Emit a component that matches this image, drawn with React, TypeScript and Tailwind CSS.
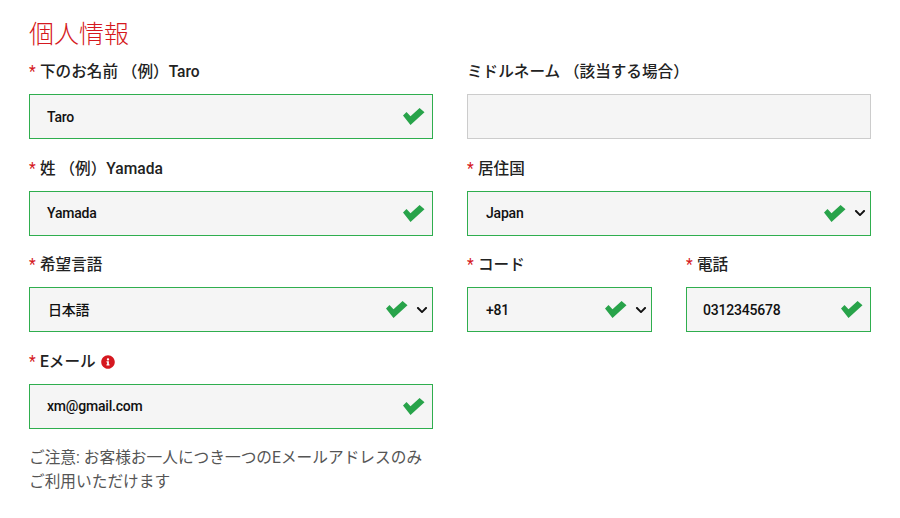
import {FaChevronDown, FaInfoCircle} from "react-icons/fa";

interface LabelProps {
	text: string,
	required?: boolean,
	info?: boolean,
}

interface FieldProps extends LabelProps {
	value?: string,
	select?: boolean,
	valid?: boolean,
	indent?: string,
}

function Check() {
	return <svg viewBox="0 0 22 17" className="w-[22px] h-[17px] shrink-0 text-[#28a34a]" fill="currentColor">
		<polygon points="0,7.5 3.5,4 7.5,8.2 16.6,0 21.5,4.2 7.5,17" />
	</svg>
}

function Label({text, required = true, info}: LabelProps) {
	return <div className="h-[26px] flex items-center text-[15.6px] font-medium leading-[26px] text-[#222]">
		{required && <span className="text-[#d51820] w-[11px] font-normal">*</span>}
		<span>{text}</span>
		{info && <FaInfoCircle className="ml-[5px] size-[14px] text-[#d51820]" />}
	</div>
}

function Field({text, required, info, value = "", select, valid = true, indent = "pl-[17px]"}: FieldProps) {
	return <div className="min-w-0">
		<Label text={text} required={required} info={info} />
		<div className={`mt-[9px] h-[45px] flex items-center bg-[#f5f5f5] border ${valid ? "border-[#2fae4e]" : "border-[#cccccc]"} ${indent} pr-[7px] text-[14px] tracking-[-0.2px] font-medium text-[#111]`}>
			<span className="flex-1 pt-[1px]">{value}</span>
			{valid && <Check />}
			{select && <FaChevronDown className="ml-[8px] -mr-[3px] size-[12px] text-[#111]" />}
		</div>
	</div>
}

export default function App() {
	return <div className="w-[900px] h-[518px] bg-white overflow-hidden pl-[29px] pt-[19px] font-['Roboto','Noto_Sans_CJK_JP',sans-serif]">
		<h1 className="text-[25px] leading-[32px] font-light text-[#d51820]">個人情報</h1>
		<div className="w-[842px] grid grid-cols-2 gap-x-[34px] gap-y-[16.5px] mt-[8px]">
			<Field text="下のお名前 （例）Taro" value="Taro" />
			<Field text="ミドルネーム （該当する場合）" required={false} valid={false} />
			<Field text="姓 （例）Yamada" value="Yamada" />
			<Field text="居住国" value="Japan" select indent="pl-[18px]" />
			<Field text="希望言語" value="日本語" select indent="pl-[18px]" />
			<div className="grid grid-cols-2 gap-x-[34px]">
				<Field text="コード" value="+81" select indent="pl-[18px]" />
				<Field text="電話" value="0312345678" indent="pl-[16px]" />
			</div>
			<div>
				<Field text="Eメール" info value="xm@gmail.com" />
				<p className="mt-[17px] text-[15.7px] leading-[24px] text-[#555]">ご注意: お客様お一人につき一つのEメールアドレスのみご利用いただけます</p>
			</div>
		</div>
	</div>
}
